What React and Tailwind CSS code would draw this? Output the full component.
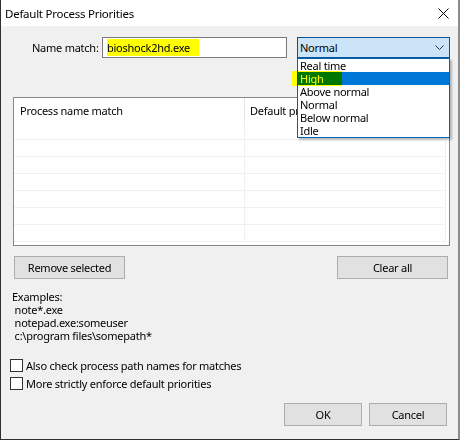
import React from 'react';

const font = "font-['Segoe_UI','Noto_Sans',sans-serif]";

const options = ['Real time', 'High', 'Above normal', 'Normal', 'Below normal', 'Idle'];

const Button = ({ label, className }) => (
  <button className={`h-[23px] bg-[#e1e1e1] border border-[#adadad] text-black ${className}`}>
    {label}
  </button>
);

const Checkbox = ({ label }) => (
  <label className="flex items-center h-[18px]">
    <span className="w-[13px] h-[13px] shrink-0 border border-[#333] bg-white" />
    <span className="ml-[3px] whitespace-nowrap">{label}</span>
  </label>
);

const App = () => {
  return (
    <div className={`w-[460px] h-[440px] flex flex-col border-l border-b border-[#2f2f2f] border-r-2 border-r-[#8c8c8c] text-[11px] tracking-[-0.25px] leading-[13px] text-black ${font}`}>
      {/* Title bar */}
      <div className="h-[26px] shrink-0 bg-white flex items-center justify-between pl-[4px] pr-[9px]">
        <span className="text-[11.5px] tracking-[-0.25px]">Default Process Priorities</span>
        <svg width="11" height="11" viewBox="0 0 11 11">
          <path d="M0.5 0.5 L10.5 10.5 M10.5 0.5 L0.5 10.5" stroke="#000" strokeWidth="1" />
        </svg>
      </div>

      {/* Body */}
      <div className="flex-1 bg-[#f0f0f0] flex flex-col">
        {/* Name match row */}
        <div className="flex items-center mt-[11px] pl-[31px]">
          <span className="w-[64px] shrink-0 whitespace-nowrap">Name match:</span>
          <div className="relative shrink-0 ml-[6px] w-[185px] h-[21px] bg-white border border-[#7a7a7a] flex items-center pl-[4px]">
            <span>bioshock2hd.exe</span>
            <div className="absolute left-[4px] top-[1px] w-[92px] h-[17px] bg-[#ffff00] mix-blend-multiply" />
          </div>
          <div className="relative shrink-0 ml-[10px] w-[153px] h-[21px] bg-[#cce4f7] border border-[#005499] flex items-center justify-between pl-[2px] pr-[5px]">
            <span>Normal</span>
            <svg width="9" height="5" viewBox="0 0 9 5">
              <polyline points="0.5,0.5 4.5,4.5 8.5,0.5" fill="none" stroke="#333" strokeWidth="1" />
            </svg>
            {/* dropdown list */}
            <div className="absolute left-[-1px] top-[20px] w-[153px] bg-white border border-[#0063b1] shadow-[2px_2px_2px_rgba(0,0,0,0.25)] z-10">
              {options.map((o) => (
                <div
                  key={o}
                  className={`h-[13px] leading-[13px] pl-[2px] ${o === 'High' ? 'bg-[#0078d7] text-white' : ''}`}
                >
                  {o}
                </div>
              ))}
              <div className="absolute left-[-6px] top-[12px] w-[50px] h-[15px] bg-[#ffff00] mix-blend-multiply" />
            </div>
          </div>
        </div>

        {/* List view */}
        <div className="ml-[12px] mt-[39px] w-[437px] h-[149px] shrink-0 bg-white border border-[#828790] overflow-hidden">
          <div className="flex h-[25px]">
            <div className="w-[230px] flex items-center pl-[6px]">Process name match</div>
            <div className="w-[1px] h-[24px] bg-[#e5e5e5]" />
            <div className="flex-1 flex items-center pl-[5px]">
              <span className="w-[47px] overflow-hidden whitespace-nowrap">Default priority</span>
            </div>
          </div>
          {[0, 1, 2, 3, 4, 5, 6].map((i) => (
            <div key={i} className="flex h-[17px] border-b border-[#f0f0f0] w-[432px]">
              <div className="w-[231px] border-r border-[#f0f0f0]" />
              <div className="w-[201px] border-r border-[#f0f0f0]" />
            </div>
          ))}
        </div>

        {/* Remove / Clear */}
        <div className="flex justify-between mt-[10px] pl-[13px] pr-[10px]">
          <Button label="Remove selected" className="w-[111px]" />
          <Button label="Clear all" className="w-[111px]" />
        </div>

        {/* Examples */}
        <div className="mt-[11px] pl-[11px] whitespace-pre">
          <div>Examples:</div>
          <div> note*.exe</div>
          <div> notepad.exe:someuser</div>
          <div> c:\program files\somepath*</div>
        </div>

        {/* Checkboxes */}
        <div className="mt-[14px] pl-[9px] flex flex-col">
          <Checkbox label="Also check process path names for matches" />
          <Checkbox label="More strictly enforce default priorities" />
        </div>

        {/* OK / Cancel */}
        <div className="flex justify-end gap-[7px] mt-[11px] pr-[11px]">
          <Button label="OK" className="w-[78px]" />
          <Button label="Cancel" className="w-[78px]" />
        </div>
      </div>
    </div>
  );
};

export default App;
